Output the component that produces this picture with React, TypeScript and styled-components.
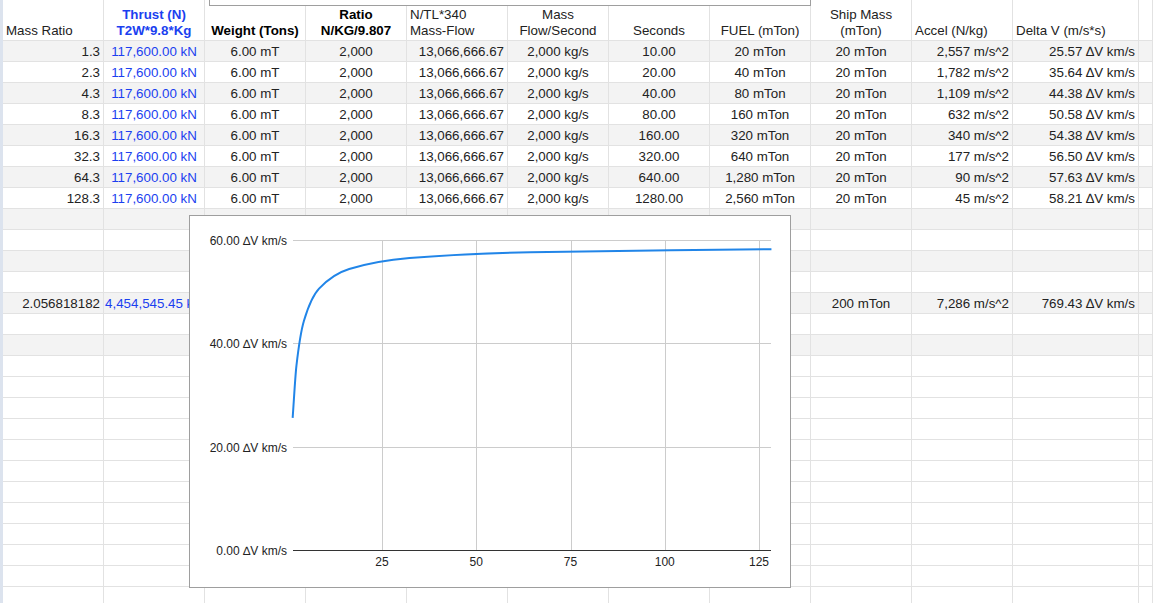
import React from "react";
import styled, { createGlobalStyle } from "styled-components";

const GlobalStyle = createGlobalStyle`
  html, body { margin: 0; padding: 0; background: #fff; overflow: hidden; }
  body { font-family: "Liberation Sans", Arial, sans-serif; font-size: 13.33px; color: #222; }
  #root { height: 603px; }
`;

const Page = styled.div`
  display: flex;
  height: 603px;
  overflow: hidden;
`;

const Stripe = styled.div`
  width: 3px;
  flex: none;
  background: #dce3ee;
`;

const Sheet = styled.div`
  position: relative;
  flex: 1;
  overflow: hidden;
`;

const Row = styled.div<{ $band?: boolean; $header?: boolean }>`
  display: grid;
  grid-template-columns: repeat(10, 101px) 126px 1fr;
  height: ${(p) => (p.$header ? 41 : 21)}px;
  box-sizing: border-box;
  border-bottom: 1px solid #e2e2e2;
  background: ${(p) => (p.$band ? "#f3f3f3" : "#fff")};
`;

type Align = "left" | "center" | "right";

const JUSTIFY: Record<Align, string> = { left: "flex-start", center: "center", right: "flex-end" };

const HeadCell = styled.div<{ $align: Align; $bold?: boolean; $blue?: boolean }>`
  box-sizing: border-box;
  border-right: 1px solid #e2e2e2;
  display: flex;
  flex-direction: column;
  justify-content: flex-end;
  padding: 0 3px 1px;
  line-height: 16px;
  text-align: ${(p) => p.$align};
  font-weight: ${(p) => (p.$bold ? 700 : 400)};
  color: ${(p) => (p.$blue ? "#1b3ff0" : p.$bold ? "#000" : "#222")};
  white-space: nowrap;
  overflow: hidden;
`;

const Cell = styled.div<{ $align: Align; $blue?: boolean }>`
  box-sizing: border-box;
  border-right: 1px solid #e2e2e2;
  display: flex;
  justify-content: ${(p) => JUSTIFY[p.$align]};
  padding: 1px 3px 0;
  line-height: 19px;
  color: ${(p) => (p.$blue ? "#1b3ff0" : "#222")};
  white-space: nowrap;
  min-width: 0;
`;

const CellText = styled.span`
  flex: none;
`;

const ChartBox = styled.div`
  position: absolute;
  left: 186px;
  top: 215px;
  width: 602px;
  height: 373px;
  box-sizing: border-box;
  border: 1px solid #9e9e9e;
  background: #fff;
`;

const TopChartEdge = styled.div`
  position: absolute;
  left: 206px;
  top: 0;
  width: 602px;
  height: 6px;
  box-sizing: border-box;
  border: 1px solid #9e9e9e;
  border-top: none;
  background: #fff;
`;

const ChartSvg = styled.svg`
  display: block;
  font-family: "Liberation Sans", Arial, sans-serif;
  font-size: 12px;
`;

const D = "\u2206";

type Col = { align: Align; blue?: boolean };
const COLS: Col[] = [
  { align: "right" },
  { align: "center", blue: true },
  { align: "center" },
  { align: "center" },
  { align: "right" },
  { align: "center" },
  { align: "center" },
  { align: "center" },
  { align: "center" },
  { align: "right" },
  { align: "right" },
  { align: "left" },
];

const HEADERS: { lines: string[]; align: Align; bold?: boolean; blue?: boolean }[] = [
  { lines: ["Mass Ratio"], align: "left" },
  { lines: ["Thrust (N)", "T2W*9.8*Kg"], align: "center", bold: true, blue: true },
  { lines: ["Weight (Tons)"], align: "center", bold: true },
  { lines: ["Ratio", "N/KG/9.807"], align: "center", bold: true },
  { lines: ["N/TL*340", "Mass-Flow"], align: "left" },
  { lines: ["Mass", "Flow/Second"], align: "center" },
  { lines: ["Seconds"], align: "center" },
  { lines: ["FUEL (mTon)"], align: "center" },
  { lines: ["Ship Mass", "(mTon)"], align: "center" },
  { lines: ["Accel (N/kg)"], align: "left" },
  { lines: ["Delta V (m/s*s)"], align: "left" },
  { lines: [""], align: "left" },
];

const RAW: [string, string, string, string, string][] = [
  ["1.3", "10.00", "20 mTon", "2,557", "25.57"],
  ["2.3", "20.00", "40 mTon", "1,782", "35.64"],
  ["4.3", "40.00", "80 mTon", "1,109", "44.38"],
  ["8.3", "80.00", "160 mTon", "632", "50.58"],
  ["16.3", "160.00", "320 mTon", "340", "54.38"],
  ["32.3", "320.00", "640 mTon", "177", "56.50"],
  ["64.3", "640.00", "1,280 mTon", "90", "57.63"],
  ["128.3", "1280.00", "2,560 mTon", "45", "58.21"],
];

const TOTAL_ROWS = 27;

function buildRows(): string[][] {
  const rows: string[][] = RAW.map(([mr, sec, fuel, acc, dv]) => [
    mr,
    "117,600.00 kN",
    "6.00 mT",
    "2,000",
    "13,066,666.67",
    "2,000 kg/s",
    sec,
    fuel,
    "20 mTon",
    `${acc} m/s^2`,
    `${dv} ${D}V km/s`,
    "",
  ]);
  while (rows.length < TOTAL_ROWS) rows.push(new Array(12).fill(""));
  rows[12] = [
    "2.056818182",
    "4,454,545.45 kN",
    "",
    "",
    "",
    "",
    "",
    "",
    "200 mTon",
    "7,286 m/s^2",
    `769.43 ${D}V km/s`,
    "",
  ];
  return rows;
}

const ROWS = buildRows();

const DATA: [number, number][] = [
  [1.3, 25.57],
  [2.3, 35.64],
  [4.3, 44.38],
  [8.3, 50.58],
  [16.3, 54.38],
  [32.3, 56.5],
  [64.3, 57.63],
  [128.3, 58.21],
];

const px = (v: number) => 97.75 + 3.77 * v;
const py = (d: number) => 334 - (310 / 60) * d;

function monotonePath(pts: [number, number][]): string {
  const n = pts.length;
  const h: number[] = [];
  const m: number[] = [];
  for (let i = 0; i < n - 1; i++) {
    h.push(pts[i + 1][0] - pts[i][0]);
    m.push((pts[i + 1][1] - pts[i][1]) / h[i]);
  }
  const t: number[] = new Array(n).fill(0);
  t[0] = m[0];
  t[n - 1] = m[n - 2];
  for (let i = 1; i < n - 1; i++) {
    if (m[i - 1] * m[i] <= 0) t[i] = 0;
    else {
      const h0 = h[i - 1];
      const h1 = h[i];
      t[i] = (3 * (h0 + h1)) / ((2 * h1 + h0) / m[i - 1] + (h1 + 2 * h0) / m[i]);
    }
  }
  let d = `M${pts[0][0].toFixed(2)},${pts[0][1].toFixed(2)}`;
  for (let i = 0; i < n - 1; i++) {
    const [x0, y0] = pts[i];
    const [x1, y1] = pts[i + 1];
    const dx = h[i] / 3;
    d += ` C${(x0 + dx).toFixed(2)},${(y0 + t[i] * dx).toFixed(2)} ${(x1 - dx).toFixed(2)},${(
      y1 -
      t[i + 1] * dx
    ).toFixed(2)} ${x1.toFixed(2)},${y1.toFixed(2)}`;
  }
  return d;
}

const CURVE = monotonePath(DATA.map(([v, d]) => [px(v), py(d)]));

const PLOT_L = 103;
const PLOT_R = 581;

function Chart() {
  const yTicks = [0, 20, 40, 60];
  const xTicks = [25, 50, 75, 100, 125];
  return (
    <ChartBox>
      <ChartSvg width={600} height={371} viewBox="0 0 600 371">
        {xTicks.map((v) => {
          const x = Math.round(px(v)) + 0.5;
          return <line key={`vx${v}`} x1={x} x2={x} y1={24} y2={334} stroke="#cccccc" strokeWidth={1} />;
        })}
        {yTicks.slice(1).map((d) => {
          const y = Math.round(py(d)) + 0.5;
          return <line key={`hy${d}`} x1={PLOT_L} x2={PLOT_R} y1={y} y2={y} stroke="#cccccc" strokeWidth={1} />;
        })}
        <line x1={PLOT_L} x2={PLOT_R} y1={334.5} y2={334.5} stroke="#333333" strokeWidth={1} />
        {yTicks.map((d) => (
          <text key={`ly${d}`} x={97} y={Math.round(py(d)) + 4.5} textAnchor="end" fill="#222">
            {`${d.toFixed(2)} ${D}V km/s`}
          </text>
        ))}
        {xTicks.map((v) => (
          <text key={`lx${v}`} x={px(v)} y={350} textAnchor="middle" fill="#222">
            {v}
          </text>
        ))}
        <path d={CURVE} fill="none" stroke="#2185e8" strokeWidth={2} strokeLinejoin="round" />
      </ChartSvg>
    </ChartBox>
  );
}

export default function App() {
  return (
    <>
      <GlobalStyle />
      <Page>
        <Stripe />
        <Sheet>
          <Row $header>
            {HEADERS.map((h, i) => (
              <HeadCell key={i} $align={h.align} $bold={h.bold} $blue={h.blue}>
                {h.lines.map((l, j) => (
                  <div key={j}>{l}</div>
                ))}
              </HeadCell>
            ))}
          </Row>
          {ROWS.map((r, ri) => (
            <Row key={ri} $band={ri < 15 && ri % 2 === 0}>
              {r.map((v, ci) => (
                <Cell key={ci} $align={COLS[ci].align} $blue={COLS[ci].blue}>
                  <CellText>{v}</CellText>
                </Cell>
              ))}
            </Row>
          ))}
          <TopChartEdge />
          <Chart />
        </Sheet>
      </Page>
    </>
  );
}
